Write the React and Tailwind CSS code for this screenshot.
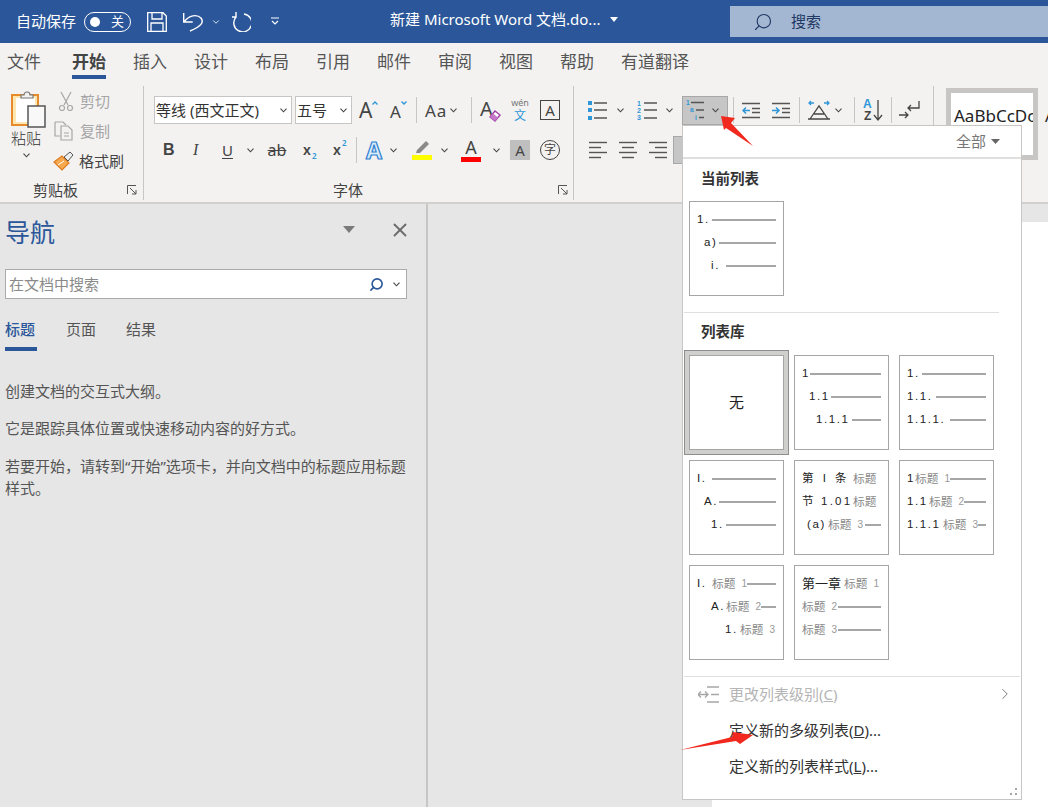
import { ChevronDown, ChevronRight, Search, X } from 'lucide-react'

const Chev = ({ className = '' }) => (
  <svg viewBox="0 0 7 5" className={`w-[7px] h-[5px] shrink-0 ${className}`} fill="none" stroke="#444" strokeWidth="1.1">
    <path d="M.5.7 3.5 3.8 6.5.7" />
  </svg>
)

const Sep = ({ className = '' }) => <div className={`w-px h-[26px] bg-[#c8c6c4] shrink-0 ${className}`} />

const Launcher = () => (
  <svg viewBox="0 0 10 10" className="w-[10px] h-[10px]" fill="none" stroke="#555" strokeWidth="1">
    <path d="M.5 9V.5H9M3 3l6 6M9 5v4H5" />
  </svg>
)

const Lines = ({ ys, x1 = 0, x2 = 18 }) => ys.map((y) => <path key={y} d={`M${x1} ${y}H${x2}`} />)

function LetterIcon({ className = '' }) {
  return <span className={`font-['Noto_Sans',sans-serif] leading-none text-[#444] ${className}`}>A</span>
}

function PasteIcon() {
  return (
    <svg viewBox="0 0 36 38" className="w-[36px] h-[38px]">
      <rect x="1" y="5" width="26" height="30" fill="#fde6b0" stroke="#e68b2c" strokeWidth="2" />
      <rect x="5" y="8" width="19" height="24" fill="#fff" />
      <path d="M10 8V5h3a3 3 0 0 1 6 0h3v3z" fill="#f3f2f1" stroke="#777" strokeWidth="1.2" />
      <rect x="17" y="16" width="17" height="21" fill="#f8f8f8" stroke="#555" strokeWidth="1.5" />
    </svg>
  )
}

function ListIcons({ type }) {
  if (type === 'bullet') {
    return (
      <svg viewBox="0 0 19 20" className="w-[19px] h-[20px]">
        <g fill="#2f96d8"><rect y="1" width="4" height="4" /><rect y="8" width="4" height="4" /><rect y="16" width="4" height="4" /></g>
        <g stroke="#555" strokeWidth="1.5"><Lines ys={[3, 10, 18]} x1={6} x2={19} /></g>
      </svg>
    )
  }
  return (
    <svg viewBox="0 0 21 20" className="w-[21px] h-[20px]">
      <g fill="#2f96d8" fontSize="7" fontWeight="700" fontFamily="Liberation Sans">
        <text x="1" y="6">1</text><text x="1" y="13">2</text><text x="1" y="20">3</text>
      </g>
      <g stroke="#555" strokeWidth="1.5"><Lines ys={[3, 10, 18]} x1={8} x2={21} /></g>
    </svg>
  )
}

function MultiIcon() {
  return (
    <svg viewBox="0 0 20 22" className="w-[20px] h-[22px]">
      <g fill="#2f96d8" fontSize="6.5" fontWeight="700" fontFamily="Liberation Sans">
        <text x="0" y="6">1</text><text x="4" y="13">a</text><text x="9" y="21">i</text>
      </g>
      <g stroke="#555" strokeWidth="1.4">
        <path d="M5 3.5h13M10 11h8M13 18.5h5" />
      </g>
    </svg>
  )
}

function Align({ kind }) {
  const rows = {
    left: ['M0 1.5h18', 'M0 6.5h12', 'M0 11.5h18', 'M0 16.5h12'],
    center: ['M0 1.5h18', 'M3 6.5h12', 'M0 11.5h18', 'M3 16.5h12'],
    right: ['M0 1.5h18', 'M6 6.5h12', 'M0 11.5h18', 'M6 16.5h12'],
  }[kind]
  return (
    <svg viewBox="0 0 18 18" className="w-[18px] h-[18px]" stroke="#555" strokeWidth="1.4">
      {rows.map((d) => <path key={d} d={d} />)}
    </svg>
  )
}

function IndentIcon({ flip }) {
  return (
    <svg viewBox="0 0 18 17" className="w-[18px] h-[17px]" fill="none">
      <g stroke="#555" strokeWidth="1.4"><path d="M0 1.5h18M10 6.5h8M10 10.5h8M0 15.5h18" /></g>
      <path d={flip ? 'M0 8.5h7M4 5.5l3 3-3 3' : 'M8 8.5H1M4 5.5l-3 3 3 3'} stroke="#2f96d8" strokeWidth="1.5" />
    </svg>
  )
}

function SelectBox({ text, className }) {
  return (
    <div className={`h-[28px] bg-white border border-[#c8c6c4] flex items-center justify-between pl-[1px] pr-[4px] text-[#333] text-[15px] shrink-0 ${className}`}>
      <span className="whitespace-nowrap">{text}</span>
      <Chev />
    </div>
  )
}

function ClipboardGroup() {
  return (
    <section className="w-[144px] h-[114px] border-r border-[#c8c6c4] flex flex-col shrink-0">
      <div className="flex h-[87px]">
        <div className="w-[58px] pl-[11px] pt-[4px] flex flex-col">
          <PasteIcon />
          <span className="text-[15px] leading-[20px] text-[#333] font-light">粘贴</span>
          <Chev className="ml-[12px] mt-[5px]" />
        </div>
        <div className="flex flex-col text-[15px] leading-[30px] text-[#a6a6a6]">
          <div className="flex items-center gap-[6px] h-[30px]">
            <svg viewBox="0 0 16 20" className="w-[16px] h-[20px]" fill="none" stroke="#a6a6a6" strokeWidth="1.2">
              <path d="M3 1l7 13M13 1 6 14" /><circle cx="4" cy="17" r="2.5" /><circle cx="12" cy="17" r="2.5" />
            </svg>
            <span>剪切</span>
          </div>
          <div className="flex items-center gap-[6px] h-[30px]">
            <svg viewBox="0 0 20 20" className="w-[20px] h-[20px] -ml-[4px]" fill="none" stroke="#a6a6a6" strokeWidth="1.2">
              <path d="M1 1h8l3 3M1 1v14h5M7 5h7l4 4v10H7zM10 12h5M10 15h5" />
            </svg>
            <span>复制</span>
          </div>
          <div className="flex items-center gap-[5px] h-[30px] text-[#444]">
            <svg viewBox="0 0 21 20" className="w-[21px] h-[20px] -ml-[5px]">
              <path d="M1 11 9 5l7 7-7 7z" fill="#f6a94f" stroke="#dd7b1d" strokeWidth="1.2" />
              <path d="M11 6l6-5 3 3-5 6z" fill="#eee" stroke="#555" />
              <path d="M5 14l6-4" stroke="#fff" />
            </svg>
            <span>格式刷</span>
          </div>
        </div>
      </div>
      <div className="mt-auto h-[20px] flex items-center text-[15px] text-[#444] pl-[33px] pr-[6px] justify-between">
        <span>剪贴板</span>
        <Launcher />
      </div>
    </section>
  )
}

function FontGroup() {
  return (
    <section className="w-[430px] h-[114px] border-r border-[#c8c6c4] pt-[10px] flex flex-col shrink-0">
      <div className="flex items-center h-[28px]">
        <SelectBox text="等线 (西文正文)" className="ml-[10px] w-[138px]" />
        <SelectBox text="五号" className="ml-[3px] w-[57px]" />
        <div className="ml-[7px] w-[20px] flex items-start">
          <LetterIcon className="text-[21px]" />
          <svg viewBox="0 0 6 4" className="w-[6px] h-[4px] mt-[1px]" fill="none" stroke="#2f96d8" strokeWidth="1.4"><path d="M.5 3.5 3 1l2.5 2.5" /></svg>
        </div>
        <div className="ml-[11px] w-[20px] flex items-start">
          <LetterIcon className="text-[17px] mt-[3px]" />
          <svg viewBox="0 0 6 4" className="w-[6px] h-[4px] mt-[1px]" fill="none" stroke="#2f96d8" strokeWidth="1.4"><path d="M.5.5 3 3 5.500.5" /></svg>
        </div>
        <Sep className="ml-[6px]" />
        <div className="ml-[8px] w-[36px] flex items-center gap-[3px]">
          <span className="text-[17px] leading-none text-[#444] font-['Noto_Sans',sans-serif] tracking-[1px]">Aa</span>
          <Chev />
        </div>
        <Sep className="ml-[10px]" />
        <div className="ml-[8px] w-[20px] relative h-[24px]">
          <LetterIcon className="text-[20px]" />
          <svg viewBox="0 0 12 12" className="absolute right-[-1px] bottom-0 w-[12px] h-[12px]">
            <path d="M1 7l5-6 5 4-5 6z" fill="#fff" stroke="#a23ea8" strokeWidth="1.4" />
            <path d="M1 7l3-3.500 5 4L6 11z" fill="#c47ac9" />
          </svg>
        </div>
        <div className="ml-[10px] w-[20px] flex flex-col items-center">
          <span className="text-[9px] text-[#777] font-['Noto_Sans',sans-serif] leading-[12px]">wén</span>
          <span className="text-[12px] text-[#2f96d8] leading-[14px]">文</span>
        </div>
        <div className="ml-[10px] w-[20px] h-[20px] border-[1.5px] border-[#444] flex items-center justify-center">
          <LetterIcon className="text-[15px]" />
        </div>
      </div>
      <div className="flex items-center h-[28px] mt-[12px] text-[#444]">
        <span className="ml-[19px] w-[10px] text-[16px] font-bold font-['Liberation_Sans',sans-serif]">B</span>
        <span className="ml-[20px] w-[10px] text-[16px] italic font-['Liberation_Serif',serif]">I</span>
        <span className="ml-[19px] w-[11px] text-[15px] underline underline-offset-2 font-['Noto_Sans',sans-serif]">U</span>
        <Chev className="ml-[14px]" />
        <span className="ml-[13px] w-[20px] text-[16px] line-through text-center font-['Noto_Sans',sans-serif]">ab</span>
        <span className="ml-[16px] w-[13px] text-[14px] font-semibold font-['Noto_Sans',sans-serif] leading-none relative">
          x<span className="absolute left-[9px] top-[9px] text-[8px] text-[#2f96d8]">2</span>
        </span>
        <span className="ml-[17px] w-[15px] text-[14px] font-semibold font-['Noto_Sans',sans-serif] leading-none relative">
          x<span className="absolute left-[9px] top-[-4px] text-[8px] text-[#2f96d8]">2</span>
        </span>
        <Sep className="ml-[8px]" />
        <span className="ml-[7px] w-[20px] text-[23px] leading-none font-bold text-[#d8ecfa] [-webkit-text-stroke:1.2px_#2f7fd0] font-['Noto_Sans',sans-serif] text-center">A</span>
        <Chev className="ml-[6px]" />
        <div className="ml-[15px] w-[20px] flex flex-col items-center">
          <svg viewBox="0 0 16 15" className="w-[16px] h-[15px]">
            <path d="M3 10 12 1l3 3-9 9H2z" fill="#8a8a8a" />
          </svg>
          <div className="w-[20px] h-[5px] bg-[#ffff00]" />
        </div>
        <Chev className="ml-[9px]" />
        <div className="ml-[13px] w-[20px] flex flex-col items-center">
          <LetterIcon className="text-[18px] leading-[15px]" />
          <div className="w-[20px] h-[5px] mt-[1px] bg-[#ff0000]" />
        </div>
        <Chev className="ml-[12px]" />
        <div className="ml-[10px] w-[20px] h-[20px] bg-[#bfbfbf] flex items-center justify-center">
          <LetterIcon className="text-[15px]" />
        </div>
        <div className="ml-[10px] w-[20px] h-[20px] rounded-full border-[1.5px] border-[#444] flex items-center justify-center text-[12px] leading-none">字</div>
      </div>
      <div className="mt-auto h-[20px] flex items-center text-[15px] text-[#444] pl-[189px] pr-[5px] justify-between">
        <span>字体</span>
        <Launcher />
      </div>
    </section>
  )
}

function ParagraphGroup() {
  return (
    <section className="w-[360px] h-[114px] border-r border-[#c8c6c4] pt-[10px] shrink-0">
      <div className="flex items-center h-[28px]">
        <div className="ml-[14px]"><ListIcons type="bullet" /></div>
        <Chev className="ml-[10px]" />
        <div className="ml-[12px]"><ListIcons type="number" /></div>
        <Chev className="ml-[9px]" />
        <div className="ml-[9px] w-[46px] h-[29px] bg-[#c6c6c6] border border-[#a8a8a8] flex items-center pl-[3px] gap-[6px] shrink-0">
          <MultiIcon />
          <Chev />
        </div>
        <Sep className="ml-[5px]" />
        <div className="ml-[8px]"><IndentIcon /></div>
        <div className="ml-[12px]"><IndentIcon flip /></div>
        <Sep className="ml-[9px]" />
        <div className="ml-[8px] w-[22px]">
          <svg viewBox="0 0 22 20" className="w-[22px] h-[20px]" fill="none">
            <path d="M1 3h5M3 1 1 3l2 2M21 3h-5M19 1l2 2-2 2" stroke="#2f96d8" strokeWidth="1.3" />
            <path d="M2 19 11 6l9 13M6 14h10M0 19h22" stroke="#444" strokeWidth="1.3" />
          </svg>
        </div>
        <Chev className="ml-[5px]" />
        <Sep className="ml-[12px]" />
        <svg viewBox="0 0 20 24" className="ml-[8px] w-[20px] h-[24px] shrink-0" fill="none">
          <g fontSize="12" fontWeight="700" fontFamily="Liberation Sans">
            <text x="0" y="10" fill="#2f96d8">A</text>
            <text x="1" y="22" fill="#444">Z</text>
          </g>
          <path d="M15 2v20M11 17l4 5 4-5" stroke="#444" strokeWidth="1.3" />
        </svg>
        <Sep className="ml-[8px]" />
        <div className="ml-[7px] w-[21px]">
          <svg viewBox="0 0 21 20" className="w-[21px] h-[20px]" fill="none" strokeWidth="1.3">
            <path d="M20 1v7H9M12 5 9 8l3 3" stroke="#444" />
            <path d="M0 15h9M6 12l3 3-3 3" stroke="#444" />
          </svg>
        </div>
      </div>
      <div className="flex items-center h-[28px] mt-[12px]">
        <div className="ml-[15px]"><Align kind="left" /></div>
        <div className="ml-[12px]"><Align kind="center" /></div>
        <div className="ml-[12px]"><Align kind="right" /></div>
        <div className="ml-[6px] w-[14px] h-[28px] bg-[#c6c6c6] border border-[#a8a8a8]" />
      </div>
    </section>
  )
}

function Ribbon() {
  return (
    <div className="h-[124px] bg-[#f3f2f1] border-b-2 border-[#d2d0ce] pt-[6px] flex overflow-hidden">
      <ClipboardGroup />
      <FontGroup />
      <ParagraphGroup />
      <div className="ml-[12px] mt-[2px] flex gap-[7px] shrink-0">
        <div className="w-[92px] h-[72px] bg-white border-[5px] border-[#c8c6c4] pl-[3px] pt-[11px] overflow-hidden text-[17px] leading-[24px] text-[#222] font-['Noto_Sans',sans-serif] whitespace-nowrap">AaBbCcDc</div>
        <div className="text-[17px] leading-[24px] pt-[16px] text-[#222] font-['Noto_Sans',sans-serif]">A</div>
      </div>
    </div>
  )
}

function NavPane() {
  return (
    <aside className="w-[428px] border-r-2 border-[#c8c6c4] bg-[#e6e6e6] pl-[5px] pr-[21px] shrink-0">
      <div className="flex items-center h-[56px] pt-[1px]">
        <h2 className="text-[25px] leading-none text-[#2b579a] font-normal whitespace-nowrap shrink-0">导航</h2>
        <svg viewBox="0 0 12 7" className="w-[12px] h-[7px] ml-[288px] -mt-[6px] shrink-0"><path d="M0 0h12L6 7z" fill="#7a7a7a" /></svg>
        <X size={22} strokeWidth={2} className="ml-[34px] -mt-[6px] text-[#6a6a6a] shrink-0" />
      </div>
      <div className="mt-[9px] h-[30px] bg-white border border-[#ababab] flex items-center pl-[3px] pr-[6px] w-[402px]">
        <span className="text-[15px] text-[#8a8a8a] flex-1">在文档中搜索</span>
        <Search size={15} strokeWidth={2.6} className="text-[#2b579a] -scale-x-100" />
        <Chev className="ml-[9px]" />
      </div>
      <div className="flex mt-[18px] text-[15px] leading-[24px] text-[#555]">
        <span className="w-[32px] pb-[6px] border-b-4 border-[#2b579a] text-[#2b579a] font-medium">标题</span>
        <span className="ml-[29px]">页面</span>
        <span className="ml-[30px]">结果</span>
      </div>
      <div className="mt-[29px] text-[15px] leading-[22px] text-[#555] w-[404px]">
        <p>创建文档的交互式大纲。</p>
        <p className="mt-[15px]">它是跟踪具体位置或快速移动内容的好方式。</p>
        <p className="mt-[16px]">若要开始，请转到“开始”选项卡，并向文档中的标题应用标题样式。</p>
      </div>
    </aside>
  )
}

function Row({ indent, width, line = true, children }) {
  return (
    <div className={`h-[23px] flex items-center whitespace-nowrap text-[11.5px] tracking-[1.6px] text-[#222] font-['Liberation_Sans','Noto_Sans_CJK_SC',sans-serif] ${indent}`}>
      <span className={`shrink-0 flex items-center ${width}`}>{children}</span>
      {line && <span className="flex-1 h-[2px] bg-[#a6a6a6]" />}
    </div>
  )
}

const Pre = ({ width, children }) => <span className={`shrink-0 ${width}`}>{children}</span>

function Head({ n }) {
  return (
    <span className="text-[#888] tracking-normal text-[11.7px] flex items-center">
      标题
      {n && <span className="ml-[6px] text-[10px] text-[#999]">{n}</span>}
    </span>
  )
}

function Thumb({ children }) {
  return <div className="w-[95px] h-[95px] border border-[#a6a6a6] bg-white pl-[7px] pr-[7px] pt-[6px] overflow-hidden">{children}</div>
}

function ListMenu() {
  return (
    <div className="absolute left-[682px] top-[125px] w-[340px] h-[675px] bg-white border border-[#c8c6c4] z-10 flex flex-col">
      <div className="h-[33px] border-b-2 border-[#e1dfdd] flex items-center justify-end pr-[21px] gap-[5px] text-[15px] text-[#777] shrink-0">
        <span>全部</span>
        <svg viewBox="0 0 9 5" className="w-[9px] h-[5px]"><path d="M0 0h9L4.500 5z" fill="#666" /></svg>
      </div>
      <h3 className="pl-[18px] mt-[9px] text-[14.5px] leading-[20px] font-bold text-[#333]">当前列表</h3>
      <div className="ml-[6px] mt-[13px]">
        <Thumb>
          <Row indent="" width="w-[15px]">1.</Row>
          <Row indent="pl-[7px]" width="w-[15px]">a)</Row>
          <Row indent="pl-[14px]" width="w-[15px]">i.</Row>
        </Thumb>
      </div>
      <div className="ml-[1px] mt-[16px] w-[315px] h-px bg-[#e1dfdd]" />
      <h3 className="pl-[18px] mt-[8px] text-[14.5px] leading-[20px] font-bold text-[#333]">列表库</h3>
      <div className="ml-[6px] mt-[14px] grid grid-cols-[95px_95px_95px] gap-x-[10px] gap-y-[10px]">
        <div className="w-[95px] h-[95px] border border-[#a6a6a6] flex items-center justify-center text-[15px] text-[#222] outline-[4px] outline-[#cfcfcd] shadow-[0_0_0_5px_#8e8e8c]">无</div>
        <Thumb>
          <Row indent="" width="w-[8px]">1</Row>
          <Row indent="pl-[7px]" width="w-[22px]">1.1</Row>
          <Row indent="pl-[14px]" width="w-[36px]">1.1.1</Row>
        </Thumb>
        <Thumb>
          <Row indent="" width="w-[15px]">1.</Row>
          <Row indent="" width="w-[29px]">1.1.</Row>
          <Row indent="" width="w-[43px]">1.1.1.</Row>
        </Thumb>
        <Thumb>
          <Row indent="" width="w-[15px]">I.</Row>
          <Row indent="pl-[7px]" width="w-[15px]">A.</Row>
          <Row indent="pl-[14px]" width="w-[15px]">1.</Row>
        </Thumb>
        <Thumb>
          <Row indent="" width="w-[79px]" line={false}><Pre width="w-[51px] tracking-[3px]">第 I 条</Pre><Head /></Row>
          <Row indent="" width="w-[79px]" line={false}><Pre width="w-[51px] tracking-[2.2px]">节 1.01</Pre><Head /></Row>
          <Row indent="pl-[5px]" width="w-[58px]"><Pre width="w-[21px]">(a)</Pre><Head n="3" /></Row>
        </Thumb>
        <Thumb>
          <Row indent="" width="w-[43px]"><Pre width="w-[8px]">1</Pre><Head n="1" /></Row>
          <Row indent="" width="w-[57px]"><Pre width="w-[22px]">1.1</Pre><Head n="2" /></Row>
          <Row indent="" width="w-[71px]"><Pre width="w-[36px]">1.1.1</Pre><Head n="3" /></Row>
        </Thumb>
        <Thumb>
          <Row indent="" width="w-[50px]"><Pre width="w-[15px]">I.</Pre><Head n="1" /></Row>
          <Row indent="pl-[14px]" width="w-[50px]"><Pre width="w-[15px]">A.</Pre><Head n="2" /></Row>
          <Row indent="pl-[28px]" width="w-[50px]" line={false}><Pre width="w-[15px]">1.</Pre><Head n="3" /></Row>
        </Thumb>
        <Thumb>
          <Row indent="" width="w-[78px]" line={false}><Pre width="w-[42px] tracking-normal text-[13px]">第一章</Pre><Head n="1" /></Row>
          <Row indent="" width="w-[36px]"><Head n="2" /></Row>
          <Row indent="" width="w-[36px]"><Head n="3" /></Row>
        </Thumb>
      </div>
      <div className="mt-[16px] ml-[1px] h-px w-[336px] bg-[#e1dfdd]" />
      <div className="h-[36px] -mt-[1px] flex items-center text-[15px] text-[#b5b5b5] shrink-0">
        <svg viewBox="0 0 21 17" className="w-[21px] h-[17px] ml-[15px]" fill="none" stroke="#a6a6a6" strokeWidth="1.3">
          <path d="M9 1h12M0 8.500h10M3 5.500 0 8.500l3 3M7 5.500l3 3-3 3M13 8.500h8M9 16h12" />
        </svg>
        <span className="ml-[10px]">更改列表级别(<span className="underline">C</span>)</span>
        <ChevronRight size={18} strokeWidth={1.3} className="ml-auto mr-[7px] text-[#777]" />
      </div>
      <div className="h-[36px] flex items-center pl-[46px] text-[15px] text-[#333] shrink-0">定义新的多级列表(<span className="underline">D</span>)...</div>
      <div className="h-[36px] flex items-center pl-[46px] text-[15px] text-[#333] shrink-0">定义新的列表样式(<span className="underline">L</span>)...</div>
      <div className="mt-auto mb-[3px] mr-[3px] self-end">
        <svg viewBox="0 0 8 8" className="w-[8px] h-[8px]" fill="#a6a6a6">
          <rect x="5" y="0" width="2" height="2" /><rect x="0" y="5" width="2" height="2" /><rect x="5" y="5" width="2" height="2" />
        </svg>
      </div>
    </div>
  )
}

export default function App() {
  return (
    <div className="relative w-[1048px] h-[807px] overflow-hidden bg-[#e6e6e6] font-['Noto_Sans','Noto_Sans_CJK_SC',sans-serif] flex flex-col">
      <header className="h-[43px] bg-[#2b579a] text-white flex items-center shrink-0">
        <span className="ml-[16px] text-[15px] whitespace-nowrap">自动保存</span>
        <div className="ml-[8px] w-[47px] h-[20px] rounded-full border border-white flex items-center justify-between pl-[5px] pr-[6px]">
          <span className="w-[10px] h-[10px] rounded-full bg-white" />
          <span className="text-[13px] leading-none">关</span>
        </div>
        <svg viewBox="0 0 20 20" className="w-[20px] h-[20px] ml-[16px]" fill="none" stroke="#fff" strokeWidth="1.3">
          <path d="M.7.700H16L19.300 4v15.300H.7zM5 1v6h10V1M4 19v-8h12v8" />
        </svg>
        <svg viewBox="0 0 20 20" className="w-[20px] h-[20px] ml-[16px]" fill="none" stroke="#fff" strokeWidth="1.4">
          <path d="M.7 1v9h9M1 10C6 3 14 2 18 6c3 4 1 8-11 13" />
        </svg>
        <ChevronDown size={10} strokeWidth={2} className="ml-[8px]" />
        <svg viewBox="0 0 20 20" className="w-[20px] h-[20px] ml-[10px]" fill="none" stroke="#fff" strokeWidth="1.4">
          <path d="M5 0v5h-4M5 5A9 9 0 1 0 13 2" />
        </svg>
        <svg viewBox="0 0 8 9" className="w-[8px] h-[9px] ml-[20px]" fill="none" stroke="#fff" strokeWidth="1.1">
          <path d="M0 1h8M1 4l3 3 3-3" />
        </svg>
        <span className="ml-[111px] -mt-[5px] text-[15px] whitespace-nowrap">新建 Microsoft Word 文档.do...</span>
        <svg viewBox="0 0 8 5" className="w-[8px] h-[5px] ml-[10px] -mt-[5px]"><path d="M0 0h8L4 5z" fill="#fff" /></svg>
        <div className="ml-auto w-[318px] h-[31px] bg-[#a4b7d2] flex items-center pl-[23px] text-[#1f3864] text-[15px]">
          <Search size={20} strokeWidth={1.4} className="-scale-x-100" />
          <span className="ml-[18px]">搜索</span>
        </div>
      </header>
      <nav className="h-[37px] bg-[#f3f2f1] flex gap-[27px] pl-[7px] pt-[7px] text-[17px] leading-[24px] text-[#555] shrink-0 whitespace-nowrap">
        {['文件', '开始', '插入', '设计', '布局', '引用', '邮件', '审阅', '视图', '帮助', '有道翻译'].map((t) =>
          t === '开始' ? (
            <span key={t} className="ml-[4px] font-bold text-[#444] h-[29px] border-b-4 border-[#2b579a]">{t}</span>
          ) : (
            <span key={t}>{t}</span>
          ),
        )}
      </nav>
      <Ribbon />
      <main className="flex-1 flex min-h-0">
        <NavPane />
        <div className="flex-1 pt-[18px] pl-[284px]">
          <div className="h-full bg-white" />
        </div>
      </main>
      <ListMenu />
      <svg viewBox="0 0 1048 807" className="absolute inset-0 w-[1048px] h-[807px] z-20 pointer-events-none">
        <path d="M721 116 735 118 731 123 753 146 726 128 724 130Z" fill="#f0281e" />
        <path d="M680 750 732 737 733 732 753 735 740 744 736 741Z" fill="#f0281e" />
      </svg>
    </div>
  )
}
